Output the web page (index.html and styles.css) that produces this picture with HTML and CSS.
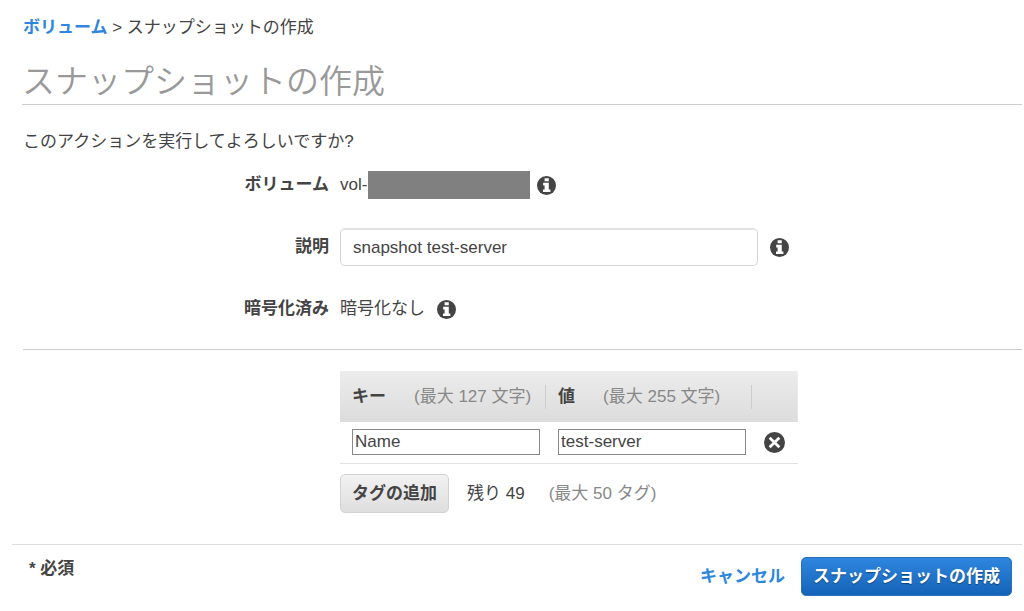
FILE: index.html
```html
<!DOCTYPE html>
<html lang="ja">
<head>
    <meta charset="UTF-8">
    <meta name="viewport" content="width=device-width, initial-scale=1.0">
    <title>スナップショットの作成</title>
    <link rel="stylesheet" href="styles.css">
</head>
<body>

<svg class="sprite" aria-hidden="true">
    <symbol id="icon-info" viewBox="0 0 20 20">
        <circle cx="10" cy="10" r="10" fill="#444"/>
        <path d="M8 2.4h4.4v3H8zM6.5 7.2h5.9v6.9h1.7v2.8H6.3v-2.8H8V10H6.5z" fill="#fff"/>
    </symbol>
    <symbol id="icon-remove" viewBox="0 0 20 20">
        <circle cx="10" cy="10" r="10" fill="#444"/>
        <path d="M5.4 5.4l9.2 9.2M14.6 5.4l-9.2 9.2" stroke="#fff" stroke-width="2.6"/>
    </symbol>
</svg>

<main class="content">
    <nav class="breadcrumb">
        <a href="#">ボリューム</a> &gt; スナップショットの作成
    </nav>
    <h1>スナップショットの作成</h1>
    <p class="confirm">このアクションを実行してよろしいですか?</p>

    <form id="snapshot-form">
        <div class="fields">
            <div class="field">
                <span class="label">ボリューム</span>
                <div class="value">
                    <span>vol-0</span><span class="masked"></span>
                    <svg class="icon icon-near"><use href="#icon-info"/></svg>
                </div>
            </div>
            <div class="field">
                <label class="label" for="description">説明</label>
                <div class="value">
                    <input type="text" id="description" class="text-input" value="snapshot test-server">
                    <svg class="icon"><use href="#icon-info"/></svg>
                </div>
            </div>
            <div class="field">
                <span class="label">暗号化済み</span>
                <div class="value">
                    <span>暗号化なし</span>
                    <svg class="icon"><use href="#icon-info"/></svg>
                </div>
            </div>
        </div>

        <div class="tags">
            <table class="tag-table">
                <thead>
                    <tr>
                        <th class="col-tag"><div class="head">キー <span class="hint">(最大 127 文字)</span></div></th>
                        <th class="col-tag"><div class="head">値 <span class="hint">(最大 255 文字)</span></div></th>
                        <th></th>
                    </tr>
                </thead>
                <tbody>
                    <tr>
                        <td><input type="text" class="tag-input" aria-label="キー" value="Name"></td>
                        <td><input type="text" class="tag-input" aria-label="値" value="test-server"></td>
                        <td><button type="button" class="btn-remove" aria-label="削除"><svg class="icon icon-remove"><use href="#icon-remove"/></svg></button></td>
                    </tr>
                </tbody>
            </table>
            <div class="tag-actions">
                <button type="button" class="btn btn-default">タグの追加</button>
                <div class="tag-count">
                    <span>残り 49</span>
                    <span class="muted">(最大 50 タグ)</span>
                </div>
            </div>
        </div>
    </form>
</main>

<footer class="footer">
    <span class="required">* 必須</span>
    <div class="actions">
        <a href="#">キャンセル</a>
        <button type="submit" form="snapshot-form" class="btn btn-primary">スナップショットの作成</button>
    </div>
</footer>

</body>
</html>
```
FILE: styles.css
```css
:root {
    --text: #444;
    --muted: #888;
    --link: #2e86de;
    --line: #ccc;
    --label-width: 306px;
    --gap: 12px;
}
* { box-sizing: border-box; }
body {
    margin: 0;
    background: #fff;
    color: var(--text);
    font-family: "Liberation Sans", "Noto Sans CJK JP", sans-serif;
    font-size: 17px;
    line-height: 24px;
}
a { color: var(--link); font-weight: 700; text-decoration: none; }
input, button { font: inherit; color: inherit; }
.sprite { display: none; }
.content { padding: 16px 2px 0 23px; }
h1 {
    margin: 19px 0 0 -1px;
    border-bottom: 1px solid var(--line);
    color: #999;
    font-size: 33px;
    font-weight: 350;
    line-height: 45px;
}
.confirm { margin: 25px 0 0; }

.fields {
    display: grid;
    gap: 24px;
    padding: 12px 0 21px;
    border-bottom: 1px solid var(--line);
}
.field {
    display: grid;
    grid-template-columns: var(--label-width) 1fr;
    column-gap: 11px;
    align-items: center;
    min-height: 38px;
}
.label { text-align: right; font-weight: 700; }
.value { display: flex; align-items: center; }
.masked {
    width: 162px;
    height: 28px;
    margin-left: -9px;
    background: #808080;
}
.icon { width: 19px; height: 19px; margin-left: 12px; flex: none; }
.icon-near { margin-left: 7px; }
.text-input {
    width: 100%;
    max-width: 418px;
    height: 38px;
    padding: 0 12px;
    border: 1px solid #d5d5d5;
    border-top: 2px solid #e2e2e2;
    border-radius: 5px;
}

.tags {
    max-width: 458px;
    margin: 21px 0 0 calc(var(--label-width) + 11px);
}
.tag-table { width: 100%; table-layout: fixed; border-collapse: collapse; }
.tag-table thead { background: linear-gradient(#ececec, #dcdcdc); }
.tag-table th { height: 51px; padding: 0; text-align: left; }
.col-tag { width: 45%; }
.head {
    display: flex;
    gap: 28px;
    padding-left: var(--gap);
    border-right: 1px solid var(--line);
}
.hint { color: var(--muted); font-weight: 400; }
.muted { color: var(--muted); }
.tag-table td { padding: 7px 6px 8px 12px; border-bottom: 1px solid #e2e2e2; line-height: 0; }
.tag-input {
    width: 100%;
    height: 26px;
    padding: 0 2px;
    border: 1px solid #888;
    line-height: 24px;
}
.btn-remove { padding: 0; border: 0; background: none; cursor: pointer; }
.icon-remove { width: 21px; height: 21px; margin: 0; }
.tag-actions { display: flex; align-items: center; gap: 18px; margin-top: 10px; }
.tag-count { display: flex; gap: 24px; }

.btn {
    height: 39px;
    padding: 0 11px;
    border-radius: 5px;
    font-weight: 700;
    cursor: pointer;
}
.btn-default { border: 1px solid #d2d2d2; background: linear-gradient(#f2f2f2, #dedede); }
.btn-primary {
    border: 1px solid #2a6fb8;
    background: linear-gradient(#2e86de, #1463b8);
    color: #fff;
    text-shadow: 0 1px 1px rgba(0,0,0,0.4);
}

.footer {
    display: flex;
    justify-content: space-between;
    margin: 31px 2px 0 12px;
    padding: 12px 10px 0 17px;
    border-top: 1px solid #ddd;
}
.required { font-weight: 700; }
.actions { display: flex; align-items: center; gap: 16px; }
```
